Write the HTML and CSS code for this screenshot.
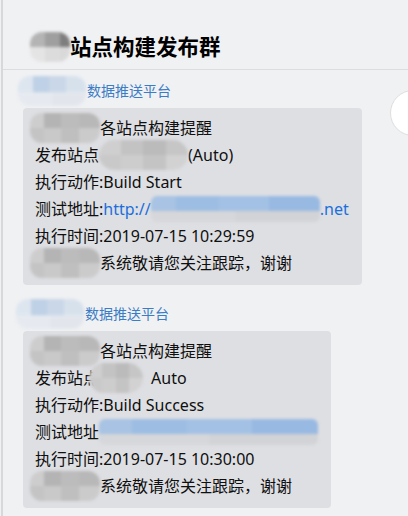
FILE: index.html
```html
<!DOCTYPE html>
<html lang="zh-CN">
<head>
    <meta charset="UTF-8">
    <meta name="viewport" content="width=device-width, initial-scale=1.0">
    <link rel="stylesheet" href="styles.css">
</head>
<body>

    <div class="chat">
        <div class="chat-header">
            <span class="blur blur-title"></span>站点构建发布群
        </div>
        <div class="side-button"></div>

        <div class="messages">
            <div class="message">
                <div class="sender"><span class="blur blur-name"></span>数据推送平台</div>
                <div class="bubble">
                    <div class="line"><span class="blur blur-grey w70"></span>各站点构建提醒</div>
                    <div class="line">发布站点<span class="blur blur-oval w89"></span>(Auto)</div>
                    <div class="line">执行动作:Build Start</div>
                    <div class="line">测试地址:<span class="link">http://<span class="blur blur-url w169"></span>.net</span></div>
                    <div class="line">执行时间:2019-07-15 10:29:59</div>
                    <div class="line"><span class="blur blur-grey w70"></span>系统敬请您关注跟踪，谢谢</div>
                </div>
            </div>

            <div class="message">
                <div class="sender second"><span class="blur blur-name"></span>数据推送平台</div>
                <div class="bubble">
                    <div class="line"><span class="blur blur-grey w70"></span>各站点构建提醒</div>
                    <div class="line">发布站点<span class="blur blur-oval w54 overlap"></span>Auto</div>
                    <div class="line">执行动作:Build Success</div>
                    <div class="line">测试地址<span class="blur blur-url w219"></span></div>
                    <div class="line">执行时间:2019-07-15 10:30:00</div>
                    <div class="line"><span class="blur blur-grey w70"></span>系统敬请您关注跟踪，谢谢</div>
                </div>
            </div>
        </div>
    </div>

</body>
</html>
```

FILE: styles.css
```css
body {
    margin: 0;
    padding-left: 1px;
    background-color: #f0f1f3;
    font-family: "Noto Sans", "Noto Sans CJK SC", sans-serif;
    color: #0f0f0f;
    overflow: hidden;
}
.chat {
    position: relative;
    height: 516px;
    overflow: hidden;
    border-left: 2px solid #d7d8da;
}
.chat-header {
    height: 70px;
    box-sizing: border-box;
    padding: 33px 0 0 27px;
    font-size: 21.5px;
    font-weight: bold;
    line-height: 28px;
    color: #000;
    border-bottom: 1px solid #dcdddf;
}
.side-button {
    position: absolute;
    left: 387px;
    top: 90px;
    width: 44px;
    height: 44px;
    border-radius: 50%;
    background-color: #fff;
    border: 1px solid #dedede;
}
.messages {
    padding-top: 11px;
}
.message {
    margin-bottom: 19px;
}
.sender {
    padding-left: 15px;
    font-size: 14px;
    line-height: 20px;
    color: #3b7cc6;
}
.sender.second {
    padding-left: 13px;
}
.bubble {
    width: fit-content;
    margin: 7px 0 0 20px;
    padding: 7px 13px 8px 12px;
    background-color: #dedfe3;
    border-radius: 4px;
    font-size: 16px;
    line-height: 27px;
}
.line {
    white-space: nowrap;
}
.link {
    color: #1b6fdc;
}

/* blurred (redacted) parts */
.blur {
    display: inline-block;
    vertical-align: top;
    filter: blur(1.5px);
    border-radius: 12px;
}
.blur-title {
    width: 40px;
    height: 30px;
    margin: -1px 0 0 0;
    background:
        linear-gradient(to right, #b4b4b4 0 38%, #9f9f9f 38% 75%, #7e7e7e 75%) top / 100% 50% no-repeat,
        linear-gradient(to right, #e4e4e4 0 38%, #dcdcdc 38% 75%, #d9d9d9 75%) bottom / 100% 50% no-repeat;
}
.blur-name {
    width: 68px;
    height: 30px;
    margin: -5px 1px -5px 0;
    background:
        linear-gradient(to right, #dde5ef 0 22%, #bfd1e6 22% 45%, #c9d7e8 45% 70%, #d7e1ec 70%) top / 100% 55% no-repeat,
        linear-gradient(to right, #e6eaf0 0 50%, #e2e6ec 50%) bottom / 100% 45% no-repeat;
}
.blur-grey {
    height: 30px;
    margin: -2px 0 -1px -5px;
    background:
        linear-gradient(to right, #cdcdcd 0 20%, #b4b4b4 20% 45%, #bcbcbc 45% 70%, #b8b8b8 70%) top / 100% 50% no-repeat,
        linear-gradient(to right, #c4c4c4 0 20%, #c9c9c9 20% 45%, #bfbfbf 45% 70%, #cbcbcb 70%) bottom / 100% 50% no-repeat;
}
.blur-oval {
    height: 30px;
    margin: -2px 0 -1px 0;
    border-radius: 15px;
    background:
        linear-gradient(to right, #cfcfcf 0 25%, #c3c3c3 25% 50%, #bbbbbb 50% 75%, #c6c6c6 75%) top / 100% 50% no-repeat,
        linear-gradient(to right, #c9c9c9 0 25%, #cdcdcd 25% 50%, #c4c4c4 50% 75%, #d2d2d2 75%) bottom / 100% 50% no-repeat;
}
.blur-oval.overlap {
    margin-left: -10px;
    margin-right: 8px;
}
.blur-url {
    height: 26px;
    margin: 0 0 -2px 0;
    border-radius: 6px;
    background:
        linear-gradient(to right, #a8c3e3 0 15%, #9dbde3 15% 40%, #a3c1e4 40% 70%, #98b9e2 70%) top / 100% 58% no-repeat,
        linear-gradient(to right, #d6d7da 0 50%, #d2d3d6 50%) bottom / 100% 42% no-repeat;
}
.w54 { width: 54px; }
.w70 { width: 70px; }
.w89 { width: 89px; }
.w169 { width: 169px; }
.w219 { width: 219px; }
```
